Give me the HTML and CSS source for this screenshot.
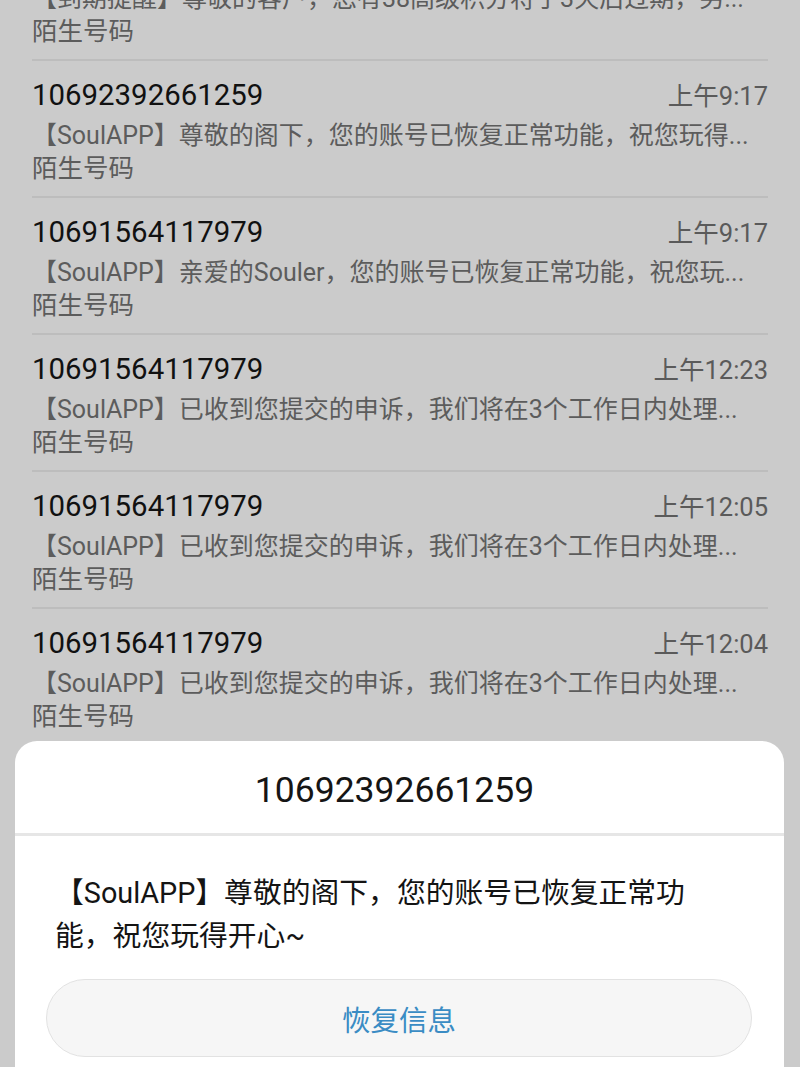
FILE: index.html
```html
<!DOCTYPE html>
<html lang="zh-CN">
<head>
<meta charset="utf-8">
<title>信息</title>
<link rel="stylesheet" href="styles.css">
</head>
<body>
<div class="screen">
  <ul class="list">
    <li class="row">
      <div class="head"><span class="num">10690000000000</span><span class="time">上午9:30</span></div>
      <div class="preview">【到期提醒】尊敬的客户，您有38高级积分将于3天后过期，另...</div>
      <div class="label">陌生号码</div>
    </li>
    <li class="row">
      <div class="head"><span class="num">10692392661259</span><span class="time">上午9:17</span></div>
      <div class="preview">【SoulAPP】尊敬的阁下，您的账号已恢复正常功能，祝您玩得...</div>
      <div class="label">陌生号码</div>
    </li>
    <li class="row">
      <div class="head"><span class="num">10691564117979</span><span class="time">上午9:17</span></div>
      <div class="preview">【SoulAPP】亲爱的Souler，您的账号已恢复正常功能，祝您玩...</div>
      <div class="label">陌生号码</div>
    </li>
    <li class="row">
      <div class="head"><span class="num">10691564117979</span><span class="time">上午12:23</span></div>
      <div class="preview">【SoulAPP】已收到您提交的申诉，我们将在3个工作日内处理...</div>
      <div class="label">陌生号码</div>
    </li>
    <li class="row">
      <div class="head"><span class="num">10691564117979</span><span class="time">上午12:05</span></div>
      <div class="preview">【SoulAPP】已收到您提交的申诉，我们将在3个工作日内处理...</div>
      <div class="label">陌生号码</div>
    </li>
    <li class="row">
      <div class="head"><span class="num">10691564117979</span><span class="time">上午12:04</span></div>
      <div class="preview">【SoulAPP】已收到您提交的申诉，我们将在3个工作日内处理...</div>
      <div class="label">陌生号码</div>
    </li>
  </ul>

  <div class="sheet">
    <div class="sheet-title">10692392661259</div>
    <div class="sheet-body">
      <p class="message">【SoulAPP】尊敬的阁下，您的账号已恢复正常功<br>能，祝您玩得开心~</p>
      <button class="restore">恢复信息</button>
    </div>
  </div>
</div>
</body>
</html>
```

FILE: styles.css
```css
* { box-sizing: border-box; }

html, body {
  margin: 0;
  padding: 0;
}

body {
  background: #cbcbcb;
  font-family: Roboto, "Noto Sans CJK SC", "Noto Sans", sans-serif;
}

.screen {
  position: relative;
  width: 800px;
  height: 1067px;
  overflow: hidden;
  background: #cbcbcb;
}

.list {
  list-style: none;
  margin: -78px 32px 0 32px;
  padding: 0;
}

.row {
  border-top: 2px solid #bdbdbd;
  padding: 16px 0 12px 0;
}

.head {
  display: flex;
  justify-content: space-between;
  align-items: baseline;
  height: 36px;
  line-height: 36px;
  margin-bottom: 7px;
}

.num {
  font-size: 29.4px;
  color: #111111;
}

.time {
  font-size: 25.5px;
  color: #5a5a5a;
}

.preview {
  font-size: 25px;
  line-height: 32px;
  height: 32px;
  color: #5c5c5c;
  white-space: nowrap;
  overflow: hidden;
  text-overflow: ellipsis;
}

.label {
  font-size: 25.5px;
  line-height: 32px;
  height: 32px;
  color: #5c5c5c;
}

.sheet {
  position: absolute;
  left: 15px;
  right: 16px;
  top: 741px;
  bottom: 0;
  background: #ffffff;
  border-radius: 22px 22px 0 0;
}

.sheet-title {
  height: 95px;
  display: flex;
  align-items: center;
  justify-content: center;
  padding: 5px 10px 0 0;
  font-size: 35.5px;
  color: #151515;
  border-bottom: 3px solid #e6e6e6;
}

.sheet-body {
  padding: 36px 32px 0 31px;
}

.message {
  margin: 0 0 21px 9px;
  font-size: 28.8px;
  line-height: 43px;
  color: #141414;
}

.restore {
  display: flex;
  align-items: center;
  justify-content: center;
  width: 100%;
  height: 78px;
  border-radius: 39px;
  background: #f6f6f6;
  border: 1px solid #e2e2e2;
  font-family: Roboto, "Noto Sans CJK SC", sans-serif;
  font-size: 28.5px;
  color: #3a8cc4;
  padding: 0;
}
```
